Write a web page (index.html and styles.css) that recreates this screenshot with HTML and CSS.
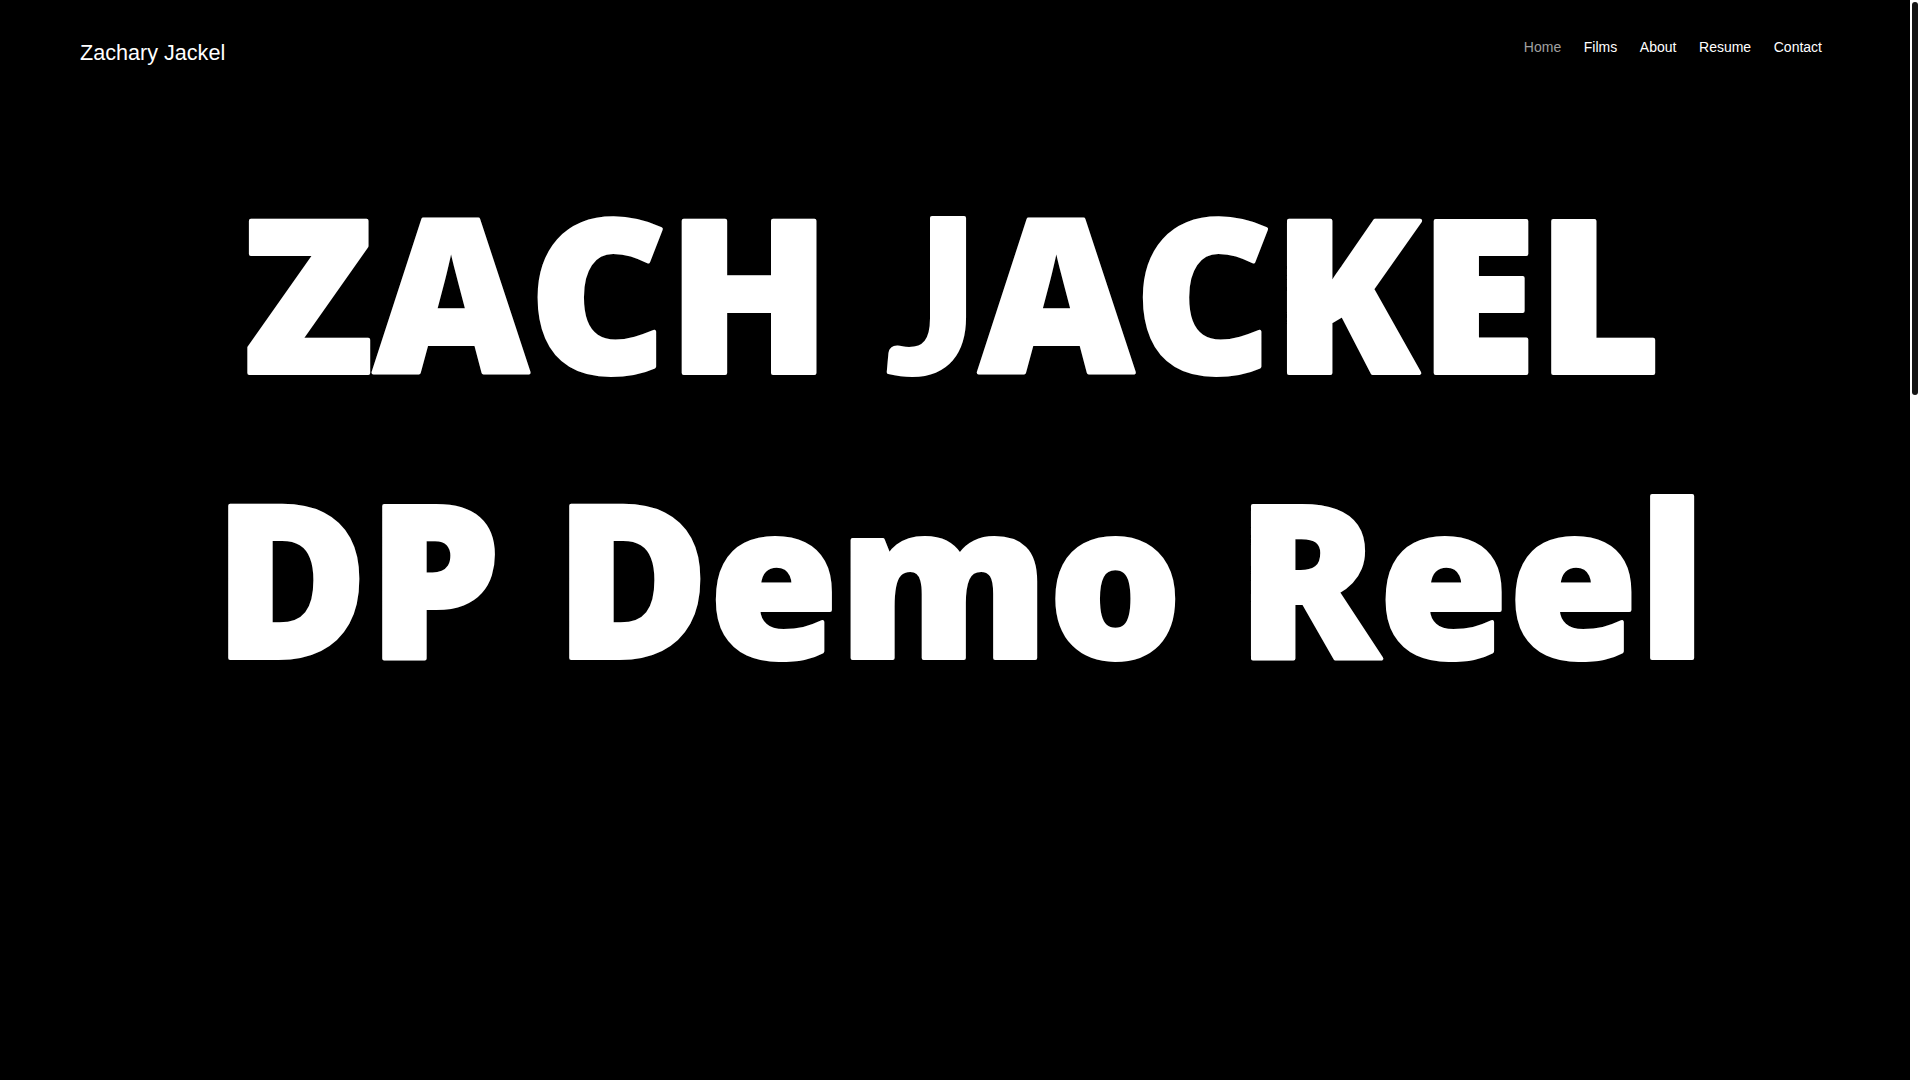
FILE: index.html
```html
<!DOCTYPE html>
<html lang="en">
<head>
<meta charset="utf-8">
<title>Zachary Jackel</title>
<link rel="stylesheet" href="styles.css">
</head>
<body>
<div class="page">
  <header class="site-header">
    <a class="logo" href="#">Zachary Jackel</a>
    <nav class="main-nav">
      <a class="nav-link is-active" href="#">Home</a>
      <a class="nav-link" href="#">Films</a>
      <a class="nav-link" href="#">About</a>
      <a class="nav-link" href="#">Resume</a>
      <a class="nav-link" href="#">Contact</a>
    </nav>
  </header>
  <main class="hero">
    <svg class="reel-poster" width="1910" height="980" viewBox="0 100 1910 980" xmlns="http://www.w3.org/2000/svg" aria-label="Zach Jackel DP Demo Reel">
      <text class="poster-line" x="243" y="373" textLength="1418" lengthAdjust="spacingAndGlyphs">ZACH <tspan class="poster-j">J</tspan>ACKEL</text>
      <text class="poster-line" x="214" y="658" textLength="1492" lengthAdjust="spacingAndGlyphs">DP Demo Reel</text>
    </svg>
  </main>
</div>
<div class="scroll-rail" aria-hidden="true"><div class="scroll-thumb"></div></div>
</body>
</html>
```
FILE: styles.css
```css
html {
  background: #000;
}
body {
  margin: 0;
  padding-right: 10px;
  background: #000;
  font-family: "Liberation Sans", Arial, sans-serif;
  color: #fff;
  overflow: hidden;
}
.page {
  background: #000;
}
.site-header {
  height: 100px;
  box-sizing: border-box;
  display: flex;
  justify-content: space-between;
  align-items: flex-start;
  padding: 0 88px 0 80px;
}
.logo {
  margin-top: 40px;
  font-size: 21.6px;
  line-height: 26px;
  color: #fff;
  text-decoration: none;
}
.main-nav {
  margin-top: 37px;
  display: flex;
  gap: 22.6px;
}
.nav-link {
  font-size: 14px;
  line-height: 20px;
  color: #fff;
  text-decoration: none;
}
.nav-link.is-active {
  color: #a0a0a0;
}
.hero {
  display: block;
}
.reel-poster {
  display: block;
}
.poster-line {
  font-family: "Open Sans", "Noto Sans", sans-serif;
  font-weight: 800;
  font-size: 213px;
  fill: #fff;
  stroke: #fff;
  stroke-width: 4px;
  stroke-linejoin: round;
}
.poster-j {
  font-family: "Lato", "Open Sans", sans-serif;
  font-weight: 900;
}
.scroll-rail {
  position: fixed;
  top: 0;
  right: 0;
  width: 10px;
  height: 100vh;
  background: #fff;
}
.scroll-thumb {
  margin: 2px 2px 0;
  width: 6px;
  height: 393px;
  border-radius: 3px;
  background: #141414;
}
```
